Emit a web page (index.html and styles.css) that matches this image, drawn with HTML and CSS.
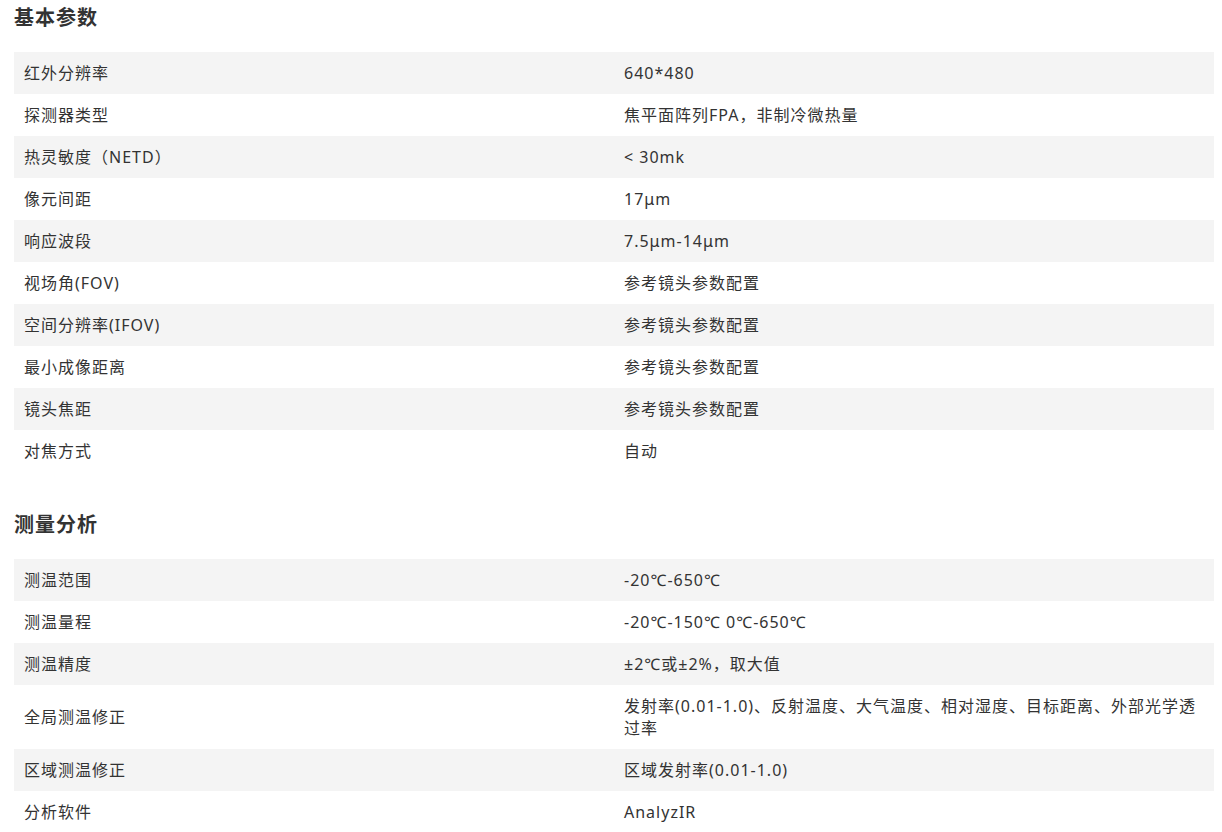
FILE: index.html
```html
<!DOCTYPE html>
<html lang="zh-CN">
<head>
<meta charset="utf-8">
<title>参数</title>
<link rel="stylesheet" href="styles.css">
</head>
<body>
<div class="page">
  <section class="block">
    <h3 class="title">基本参数</h3>
    <table class="spec">
      <tbody>
        <tr><td>红外分辨率</td><td>640*480</td></tr>
        <tr><td>探测器类型</td><td>焦平面阵列FPA，非制冷微热量</td></tr>
        <tr><td>热灵敏度（NETD）</td><td>&lt; 30mk</td></tr>
        <tr><td>像元间距</td><td>17μm</td></tr>
        <tr><td>响应波段</td><td>7.5μm-14μm</td></tr>
        <tr><td>视场角(FOV)</td><td>参考镜头参数配置</td></tr>
        <tr><td>空间分辨率(IFOV)</td><td>参考镜头参数配置</td></tr>
        <tr><td>最小成像距离</td><td>参考镜头参数配置</td></tr>
        <tr><td>镜头焦距</td><td>参考镜头参数配置</td></tr>
        <tr><td>对焦方式</td><td>自动</td></tr>
      </tbody>
    </table>
  </section>
  <section class="block">
    <h3 class="title">测量分析</h3>
    <table class="spec">
      <tbody>
        <tr><td>测温范围</td><td>-20℃-650℃</td></tr>
        <tr><td>测温量程</td><td>-20℃-150℃ 0℃-650℃</td></tr>
        <tr><td>测温精度</td><td>±2℃或±2%，取大值</td></tr>
        <tr><td>全局测温修正</td><td>发射率(0.01-1.0)、反射温度、大气温度、相对湿度、目标距离、外部光学透过率</td></tr>
        <tr><td>区域测温修正</td><td>区域发射率(0.01-1.0)</td></tr>
        <tr><td>分析软件</td><td>AnalyzIR</td></tr>
      </tbody>
    </table>
  </section>
</div>
</body>
</html>
```
FILE: styles.css
```css
html, body {
  margin: 0;
  padding: 0;
  background: #ffffff;
}
.page {
  padding: 0 8px 0 14px;
  font-family: "Noto Sans", "Noto Sans CJK SC", sans-serif;
  color: #333333;
}
.block + .block {
  margin-top: 35px;
}
.title {
  margin: 0 0 16px 0;
  height: 36px;
  line-height: 36px;
  font-size: 20px;
  letter-spacing: 1px;
  font-weight: bold;
  color: #333333;
}
.spec {
  width: 1200px;
  border-collapse: collapse;
  table-layout: fixed;
}
.spec td {
  width: 50%;
  padding: 10px 10px;
  font-size: 16px;
  line-height: 22px;
  letter-spacing: 1px;
  vertical-align: middle;
  color: #333333;
}
.spec tr:nth-child(odd) td {
  background: #f4f4f4;
}
```
